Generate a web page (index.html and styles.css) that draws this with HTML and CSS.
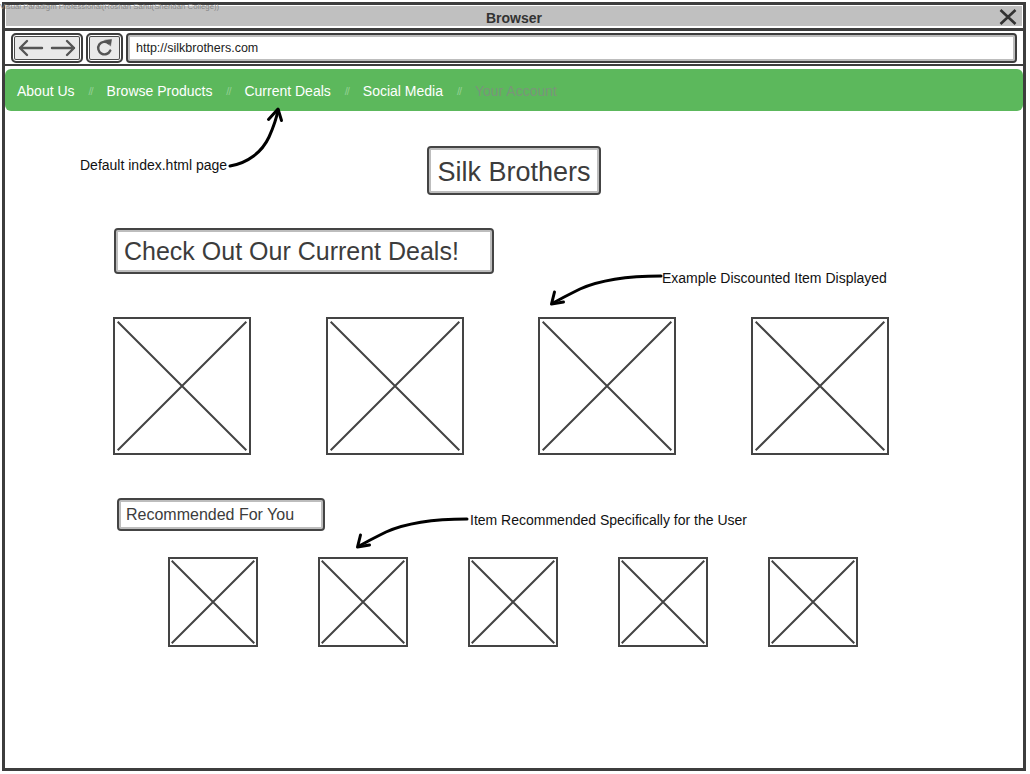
FILE: index.html
```html
<!DOCTYPE html>
<html lang="en">
<head>
<meta charset="utf-8">
<title>Silk Brothers - Current Deals</title>
<link rel="stylesheet" href="styles.css">
</head>
<body>
<div class="frame">
  <div class="titlebar">
    <span class="title">Browser</span>
    <svg class="close" viewBox="0 0 18 16" width="18" height="16"><path d="M1.5 1 L16.5 15 M16.5 1 L1.5 15"/></svg>
  </div>
  <div class="toolbar">
    <div class="tbtn history">
      <svg viewBox="0 0 68 26" width="68" height="26"><path d="M7 13 H29 M14 6 L7 13 L14 20 M39 13 H61 M54 6 L61 13 L54 20"/></svg>
    </div>
    <div class="tbtn reload">
      <svg viewBox="0 0 33 26" width="33" height="26"><path class="arc" d="M20.5 8.2 A6.3 6.3 0 1 0 22.3 15.5"/><path class="head" d="M17 5.2 L23.6 4.4 L22.6 10.8 Z"/></svg>
    </div>
    <div class="url">http://silkbrothers.com</div>
  </div>
  <nav class="navbar">
    <a class="nav-link">About Us</a><span class="sep">//</span>
    <a class="nav-link">Browse Products</a><span class="sep">//</span>
    <a class="nav-link">Current Deals</a><span class="sep">//</span>
    <a class="nav-link">Social Media</a><span class="sep">//</span>
    <span class="nav-link disabled">Your Account</span>
  </nav>
  <main class="content">
    <div class="box brand">Silk Brothers</div>
    <div class="box deals-title">Check Out Our Current Deals!</div>
    <div class="row deals">
      <div class="ph ph-lg"><svg viewBox="0 0 100 100" preserveAspectRatio="none"><path d="M2 2 L98 98 M98 2 L2 98"/></svg></div>
      <div class="ph ph-lg"><svg viewBox="0 0 100 100" preserveAspectRatio="none"><path d="M2 2 L98 98 M98 2 L2 98"/></svg></div>
      <div class="ph ph-lg"><svg viewBox="0 0 100 100" preserveAspectRatio="none"><path d="M2 2 L98 98 M98 2 L2 98"/></svg></div>
      <div class="ph ph-lg"><svg viewBox="0 0 100 100" preserveAspectRatio="none"><path d="M2 2 L98 98 M98 2 L2 98"/></svg></div>
    </div>
    <div class="box rec-title">Recommended For You</div>
    <div class="row recs">
      <div class="ph ph-sm"><svg viewBox="0 0 100 100" preserveAspectRatio="none"><path d="M2 2 L98 98 M98 2 L2 98"/></svg></div>
      <div class="ph ph-sm"><svg viewBox="0 0 100 100" preserveAspectRatio="none"><path d="M2 2 L98 98 M98 2 L2 98"/></svg></div>
      <div class="ph ph-sm"><svg viewBox="0 0 100 100" preserveAspectRatio="none"><path d="M2 2 L98 98 M98 2 L2 98"/></svg></div>
      <div class="ph ph-sm"><svg viewBox="0 0 100 100" preserveAspectRatio="none"><path d="M2 2 L98 98 M98 2 L2 98"/></svg></div>
      <div class="ph ph-sm"><svg viewBox="0 0 100 100" preserveAspectRatio="none"><path d="M2 2 L98 98 M98 2 L2 98"/></svg></div>
    </div>
  </main>
</div>

<div class="watermark">Visual Paradigm Professional(Roshan Sahu(Sheridan College))</div>
<div class="note note-default">Default index.html page</div>
<div class="note note-deal">Example Discounted Item Displayed</div>
<div class="note note-rec">Item Recommended Specifically for the User</div>
<svg class="arrows" viewBox="0 0 1030 774" width="1030" height="774">
  <path d="M230 166 C248 163 262 152 269 137 C274 126 276.5 118 278 110"/>
  <path d="M268.5 119.5 L278 109 L281.5 120.5"/>
  <path d="M661 276 C630 276 600 280 580 289 C568 295 560 299 553 303"/>
  <path d="M554.5 292 L551.5 304 L563.5 302"/>
  <path d="M467 519 C436 519 406 523 386 532 C374 538 366 542 359 546"/>
  <path d="M360.5 535 L357.5 547 L369.5 545"/>
</svg>
</body>
</html>
```

FILE: styles.css
```css
html, body {
  margin: 0;
  padding: 0;
  background: #ffffff;
}

body {
  font-family: "Liberation Sans", Arial, sans-serif;
  color: #222;
  width: 1030px;
  height: 774px;
  position: relative;
  overflow: hidden;
}

.frame {
  box-sizing: border-box;
  margin: 2px 0 0 2px;
  width: 1024px;
  height: 769px;
  border: 3px solid #3d3d3d;
  background: #fff;
  display: flex;
  flex-direction: column;
}

/* title bar */
.titlebar {
  margin: 1px 1px 0 1px;
  height: 20px;
  background: #c0c0c0;
  display: grid;
  grid-template-columns: 1fr auto 1fr;
  align-items: center;
}

.title {
  grid-column: 2;
  font-weight: bold;
  font-size: 14px;
  color: #333;
  line-height: 20px;
  padding-top: 2px;
}

.close {
  grid-column: 3;
  justify-self: end;
  margin-right: 5px;
}

.close path {
  stroke: #333;
  stroke-width: 2.6;
  fill: none;
}

/* toolbar */
.toolbar {
  margin-top: 2px;
  border-top: 3px solid #3d3d3d;
  border-bottom: 2px solid #3d3d3d;
  padding: 2px 6px 1px 6px;
  display: flex;
  gap: 3px;
  height: 30px;
}

.tbtn {
  box-sizing: border-box;
  height: 30px;
  border: 2px solid #3d3d3d;
  border-radius: 5px;
  background: #e9e9e9;
  box-shadow: inset 0 0 0 1px #ffffff, inset 0 0 0 2px #4a4a4a;
  display: flex;
  align-items: center;
  justify-content: center;
}

.history { width: 72px; }
.reload { width: 37px; }

.tbtn svg path {
  fill: none;
  stroke: #555;
  stroke-width: 2.4;
  stroke-linecap: round;
  stroke-linejoin: round;
}

.tbtn svg path.head {
  fill: #555;
  stroke-width: 0.5;
}

.url {
  flex: 1;
  box-sizing: border-box;
  height: 30px;
  border: 2px solid #3d3d3d;
  border-radius: 4px;
  box-shadow: inset 0 0 0 2px #bdbdbd;
  background: #fff;
  padding-left: 8px;
  font-size: 12.5px;
  line-height: 26px;
  color: #222;
}

/* green nav */
.navbar {
  margin-top: 3px;
  height: 42px;
  box-sizing: border-box;
  padding: 2px 12px 0 12px;
  background: #5cb85c;
  border-radius: 6px;
  display: flex;
  align-items: center;
  font-size: 14px;
}

.nav-link {
  color: #ffffff;
  text-decoration: none;
  white-space: nowrap;
}

.nav-link.disabled {
  color: #7a957a;
}

.sep {
  width: 32px;
  text-align: center;
  font-size: 11px;
  letter-spacing: -1px;
  color: rgba(255, 255, 255, 0.35);
}

/* content */
.content {
  display: flex;
  flex-direction: column;
  align-items: flex-start;
}

.box {
  box-sizing: border-box;
  border: 2px solid #444;
  border-radius: 4px;
  box-shadow: inset 0 0 0 2px #bdbdbd;
  background: #fff;
  color: #3c3c3c;
  display: flex;
  align-items: center;
  white-space: nowrap;
}

.brand {
  align-self: center;
  width: 174px;
  height: 49px;
  margin-top: 35px;
  padding-top: 3px;
  justify-content: center;
  font-size: 27px;
}

.deals-title {
  width: 380px;
  height: 46px;
  margin: 33px 0 0 109px;
  padding-left: 8px;
  padding-top: 1px;
  font-size: 25px;
}

.rec-title {
  width: 208px;
  height: 33px;
  margin: 43px 0 0 112px;
  padding-left: 7px;
  font-size: 16px;
}

.row {
  display: flex;
}

.deals {
  margin: 43px 0 0 108px;
  gap: 74.6px;
}

.recs {
  margin: 26px 0 0 163px;
  gap: 60px;
}

.ph {
  box-sizing: border-box;
  border: 2px solid #444;
  background: #fff;
}

.ph svg {
  display: block;
  width: 100%;
  height: 100%;
}

.ph svg path {
  stroke: #444;
  stroke-width: 2;
  fill: none;
  vector-effect: non-scaling-stroke;
}

.ph-lg { width: 138px; height: 138px; }
.ph-sm { width: 90px; height: 90px; }

/* overlays: watermark, annotations, arrows */
.watermark {
  position: absolute;
  left: 0;
  top: 2px;
  font-size: 7.8px;
  line-height: 9px;
  color: #888888;
  white-space: nowrap;
}

.note {
  position: absolute;
  font-size: 14px;
  line-height: 16px;
  color: #111;
  white-space: nowrap;
}

.note-default { left: 80px; top: 157px; }
.note-deal { left: 662px; top: 270px; }
.note-rec { left: 470px; top: 512px; }

.arrows {
  position: absolute;
  left: 0;
  top: 0;
  pointer-events: none;
}

.arrows path {
  fill: none;
  stroke: #000;
  stroke-width: 3;
  stroke-linecap: round;
  stroke-linejoin: round;
}
```
